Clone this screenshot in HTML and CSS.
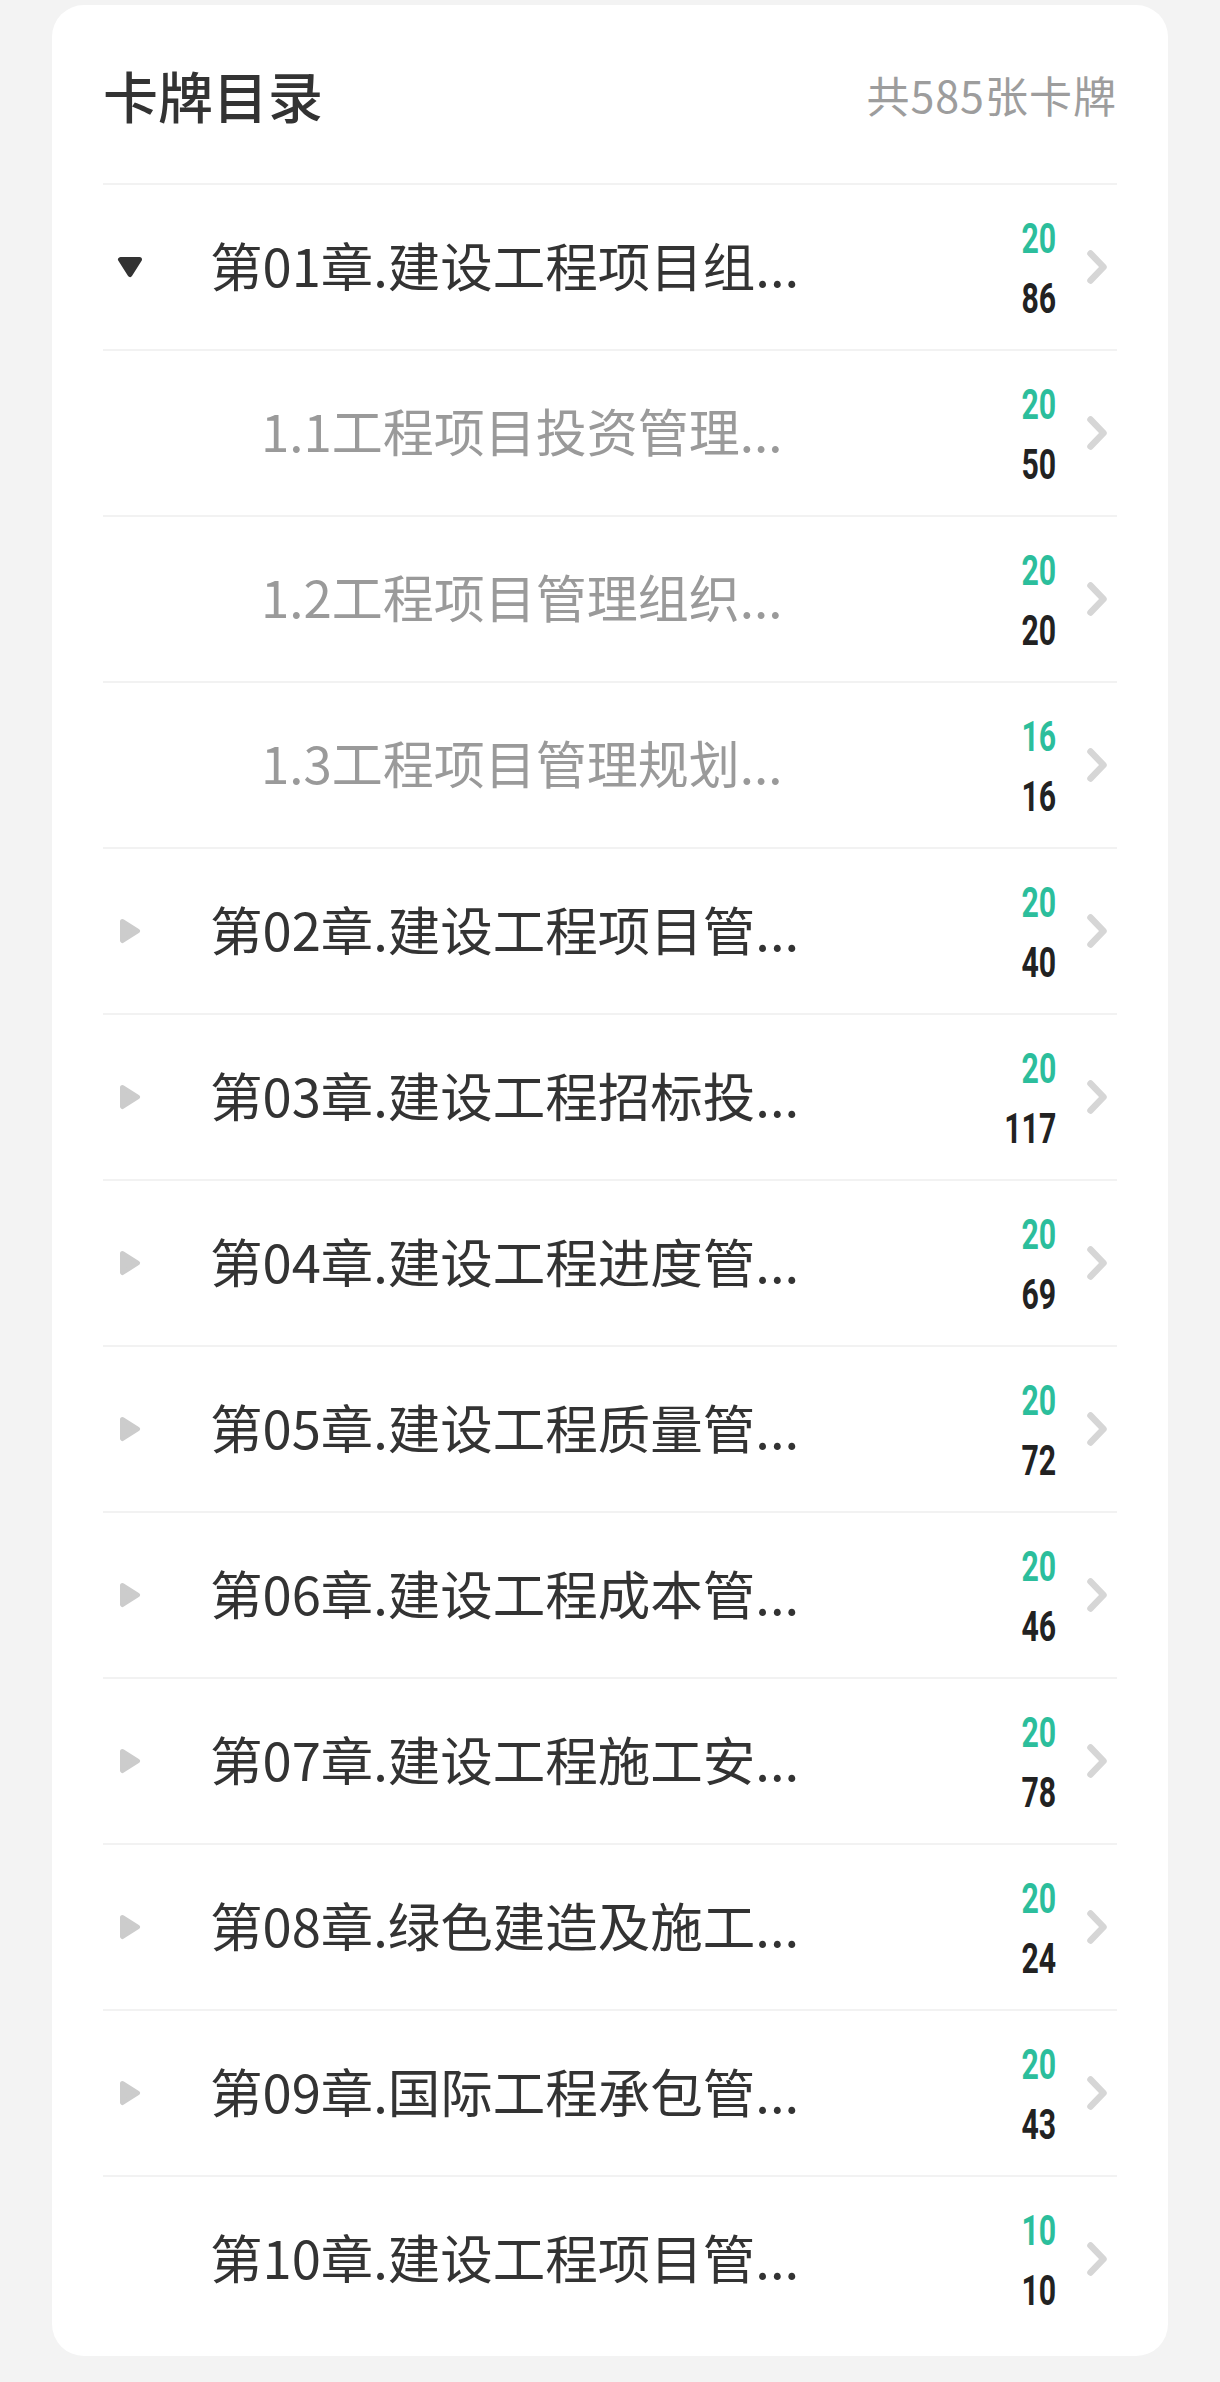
FILE: index.html
```html
<!DOCTYPE html>
<html lang="zh-CN">
<head>
<meta charset="utf-8">
<title>卡牌目录</title>
<link rel="stylesheet" href="styles.css">
</head>
<body>
<div class="card">
  <div class="header">
    <div class="title">卡牌目录</div>
    <div class="total">共585张卡牌</div>
  </div>

  <div class="row">
    <span class="icon"><svg class="tri-down" viewBox="0 0 26 22" width="26" height="22"><polygon points="3.5,3.5 22.5,3.5 13,18.5" /></svg></span>
    <span class="name">第01章.建设工程项目组...</span>
    <span class="nums"><span class="done">20</span><span class="all">86</span></span>
    <svg class="chev" viewBox="0 0 20 34" width="20" height="34"><polyline points="3.5,3.5 16.5,17 3.5,30.5" /></svg>
  </div>

  <div class="row sub">
    <span class="name">1.1工程项目投资管理...</span>
    <span class="nums"><span class="done">20</span><span class="all">50</span></span>
    <svg class="chev" viewBox="0 0 20 34" width="20" height="34"><polyline points="3.5,3.5 16.5,17 3.5,30.5" /></svg>
  </div>

  <div class="row sub">
    <span class="name">1.2工程项目管理组织...</span>
    <span class="nums"><span class="done">20</span><span class="all">20</span></span>
    <svg class="chev" viewBox="0 0 20 34" width="20" height="34"><polyline points="3.5,3.5 16.5,17 3.5,30.5" /></svg>
  </div>

  <div class="row sub">
    <span class="name">1.3工程项目管理规划...</span>
    <span class="nums"><span class="done">16</span><span class="all">16</span></span>
    <svg class="chev" viewBox="0 0 20 34" width="20" height="34"><polyline points="3.5,3.5 16.5,17 3.5,30.5" /></svg>
  </div>

  <div class="row">
    <span class="icon"><svg class="tri-right" viewBox="0 0 22 26" width="22" height="26"><polygon points="3.5,3.5 18.5,13 3.5,22.5" /></svg></span>
    <span class="name">第02章.建设工程项目管...</span>
    <span class="nums"><span class="done">20</span><span class="all">40</span></span>
    <svg class="chev" viewBox="0 0 20 34" width="20" height="34"><polyline points="3.5,3.5 16.5,17 3.5,30.5" /></svg>
  </div>

  <div class="row">
    <span class="icon"><svg class="tri-right" viewBox="0 0 22 26" width="22" height="26"><polygon points="3.5,3.5 18.5,13 3.5,22.5" /></svg></span>
    <span class="name">第03章.建设工程招标投...</span>
    <span class="nums"><span class="done">20</span><span class="all">117</span></span>
    <svg class="chev" viewBox="0 0 20 34" width="20" height="34"><polyline points="3.5,3.5 16.5,17 3.5,30.5" /></svg>
  </div>

  <div class="row">
    <span class="icon"><svg class="tri-right" viewBox="0 0 22 26" width="22" height="26"><polygon points="3.5,3.5 18.5,13 3.5,22.5" /></svg></span>
    <span class="name">第04章.建设工程进度管...</span>
    <span class="nums"><span class="done">20</span><span class="all">69</span></span>
    <svg class="chev" viewBox="0 0 20 34" width="20" height="34"><polyline points="3.5,3.5 16.5,17 3.5,30.5" /></svg>
  </div>

  <div class="row">
    <span class="icon"><svg class="tri-right" viewBox="0 0 22 26" width="22" height="26"><polygon points="3.5,3.5 18.5,13 3.5,22.5" /></svg></span>
    <span class="name">第05章.建设工程质量管...</span>
    <span class="nums"><span class="done">20</span><span class="all">72</span></span>
    <svg class="chev" viewBox="0 0 20 34" width="20" height="34"><polyline points="3.5,3.5 16.5,17 3.5,30.5" /></svg>
  </div>

  <div class="row">
    <span class="icon"><svg class="tri-right" viewBox="0 0 22 26" width="22" height="26"><polygon points="3.5,3.5 18.5,13 3.5,22.5" /></svg></span>
    <span class="name">第06章.建设工程成本管...</span>
    <span class="nums"><span class="done">20</span><span class="all">46</span></span>
    <svg class="chev" viewBox="0 0 20 34" width="20" height="34"><polyline points="3.5,3.5 16.5,17 3.5,30.5" /></svg>
  </div>

  <div class="row">
    <span class="icon"><svg class="tri-right" viewBox="0 0 22 26" width="22" height="26"><polygon points="3.5,3.5 18.5,13 3.5,22.5" /></svg></span>
    <span class="name">第07章.建设工程施工安...</span>
    <span class="nums"><span class="done">20</span><span class="all">78</span></span>
    <svg class="chev" viewBox="0 0 20 34" width="20" height="34"><polyline points="3.5,3.5 16.5,17 3.5,30.5" /></svg>
  </div>

  <div class="row">
    <span class="icon"><svg class="tri-right" viewBox="0 0 22 26" width="22" height="26"><polygon points="3.5,3.5 18.5,13 3.5,22.5" /></svg></span>
    <span class="name">第08章.绿色建造及施工...</span>
    <span class="nums"><span class="done">20</span><span class="all">24</span></span>
    <svg class="chev" viewBox="0 0 20 34" width="20" height="34"><polyline points="3.5,3.5 16.5,17 3.5,30.5" /></svg>
  </div>

  <div class="row">
    <span class="icon"><svg class="tri-right" viewBox="0 0 22 26" width="22" height="26"><polygon points="3.5,3.5 18.5,13 3.5,22.5" /></svg></span>
    <span class="name">第09章.国际工程承包管...</span>
    <span class="nums"><span class="done">20</span><span class="all">43</span></span>
    <svg class="chev" viewBox="0 0 20 34" width="20" height="34"><polyline points="3.5,3.5 16.5,17 3.5,30.5" /></svg>
  </div>

  <div class="row">
    <span class="icon"></span>
    <span class="name">第10章.建设工程项目管...</span>
    <span class="nums"><span class="done">10</span><span class="all">10</span></span>
    <svg class="chev" viewBox="0 0 20 34" width="20" height="34"><polyline points="3.5,3.5 16.5,17 3.5,30.5" /></svg>
  </div>
</div>
</body>
</html>
```

FILE: styles.css
```css
html, body {
  margin: 0;
  background: #f3f3f3;
}
body {
  padding: 5px 52px 27px;
  font-family: "Noto Sans CJK SC", "Noto Sans", sans-serif;
}
.card {
  background: #fff;
  border-radius: 32px;
  padding: 0 51px 15px;
}
.header {
  height: 178px;
  display: flex;
  align-items: center;
  justify-content: space-between;
}
.title {
  font-size: 55px;
  font-weight: 500;
  color: #333;
  line-height: 1;
}
.total {
  font-size: 43px;
  letter-spacing: 1px;
  color: #9d9d9d;
  line-height: 1;
}
.row {
  box-sizing: border-box;
  height: 166px;
  border-top: 2px solid #f2f2f2;
  display: flex;
  align-items: center;
}
.icon {
  width: 54px;
  margin-right: 53px;
  display: flex;
  justify-content: center;
  align-items: center;
  flex: none;
}
.tri-down polygon {
  fill: #333;
  stroke: #333;
  stroke-width: 5;
  stroke-linejoin: round;
}
.tri-right polygon {
  fill: #cccccc;
  stroke: #cccccc;
  stroke-width: 5;
  stroke-linejoin: round;
}
.name {
  flex: 1;
  min-width: 0;
  font-size: 52.5px;
  color: #333;
  white-space: nowrap;
  line-height: 1;
  margin-bottom: 5px;
}
.sub .name {
  padding-left: 158px;
  font-size: 51px;
  color: #9a9a9a;
}
.nums {
  display: flex;
  flex-direction: column;
  align-items: flex-end;
  margin-right: 31px;
  font-family: Roboto, "Liberation Sans", sans-serif;
  font-weight: 700;
  font-size: 42px;
  line-height: 60px;
  padding-top: 4px;
  transform: scaleX(0.72);
  transform-origin: right center;
}
.done {
  color: #2cbe9c;
}
.all {
  color: #222;
}
.chev {
  flex: none;
  margin-right: 10px;
}
.chev polyline {
  fill: none;
  stroke: #d6d6d6;
  stroke-width: 6.5;
  stroke-linecap: round;
  stroke-linejoin: round;
}
```
